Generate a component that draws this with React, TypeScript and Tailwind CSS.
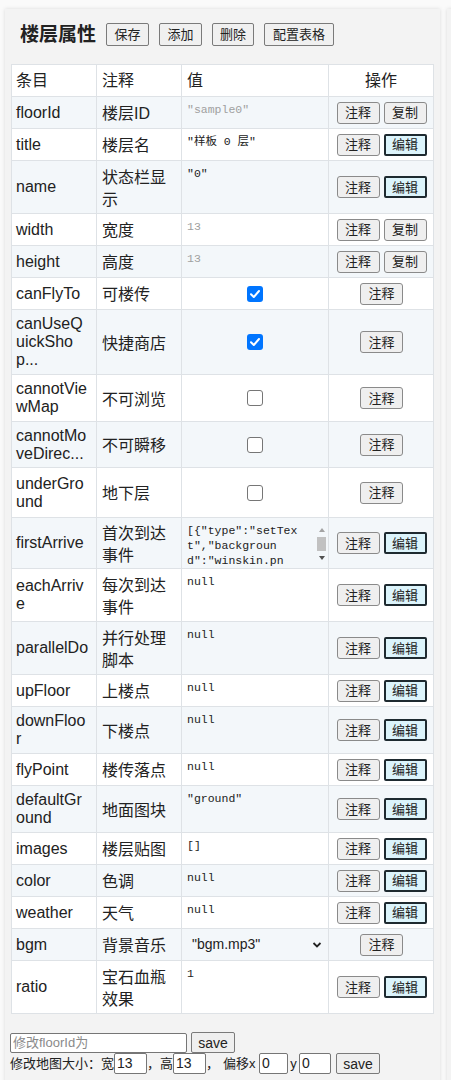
import React from "react";

type Val =
  | { t: "text"; s: string; gray?: boolean }
  | { t: "check"; on: boolean }
  | { t: "area" }
  | { t: "select"; s: string };

type Row = { k: string[]; n: string[]; v: Val; ops: string[]; h: string };

const rows: Row[] = [
  { k: ["floorId"], n: ["楼层ID"], v: { t: "text", s: '"sample0"', gray: true }, ops: ["注释", "复制"], h: "h-[32px]" },
  { k: ["title"], n: ["楼层名"], v: { t: "text", s: '"样板 0 层"' }, ops: ["注释", "编辑"], h: "h-[32px]" },
  { k: ["name"], n: ["状态栏显", "示"], v: { t: "text", s: '"0"' }, ops: ["注释", "编辑"], h: "h-[53px]" },
  { k: ["width"], n: ["宽度"], v: { t: "text", s: "13", gray: true }, ops: ["注释", "复制"], h: "h-[32px]" },
  { k: ["height"], n: ["高度"], v: { t: "text", s: "13", gray: true }, ops: ["注释", "复制"], h: "h-[32px]" },
  { k: ["canFlyTo"], n: ["可楼传"], v: { t: "check", on: true }, ops: ["注释"], h: "h-[32px]" },
  { k: ["canUseQ", "uickSho", "p..."], n: ["快捷商店"], v: { t: "check", on: true }, ops: ["注释"], h: "h-[65px]" },
  { k: ["cannotVie", "wMap"], n: ["不可浏览"], v: { t: "check", on: false }, ops: ["注释"], h: "h-[47px]" },
  { k: ["cannotMo", "veDirec..."], n: ["不可瞬移"], v: { t: "check", on: false }, ops: ["注释"], h: "h-[46px]" },
  { k: ["underGro", "und"], n: ["地下层"], v: { t: "check", on: false }, ops: ["注释"], h: "h-[50px]" },
  { k: ["firstArrive"], n: ["首次到达", "事件"], v: { t: "area" }, ops: ["注释", "编辑"], h: "h-[51px]" },
  { k: ["eachArriv", "e"], n: ["每次到达", "事件"], v: { t: "text", s: "null" }, ops: ["注释", "编辑"], h: "h-[53px]" },
  { k: ["parallelDo"], n: ["并行处理", "脚本"], v: { t: "text", s: "null" }, ops: ["注释", "编辑"], h: "h-[53px]" },
  { k: ["upFloor"], n: ["上楼点"], v: { t: "text", s: "null" }, ops: ["注释", "编辑"], h: "h-[32px]" },
  { k: ["downFloo", "r"], n: ["下楼点"], v: { t: "text", s: "null" }, ops: ["注释", "编辑"], h: "h-[47px]" },
  { k: ["flyPoint"], n: ["楼传落点"], v: { t: "text", s: "null" }, ops: ["注释", "编辑"], h: "h-[32px]" },
  { k: ["defaultGr", "ound"], n: ["地面图块"], v: { t: "text", s: '"ground"' }, ops: ["注释", "编辑"], h: "h-[47px]" },
  { k: ["images"], n: ["楼层贴图"], v: { t: "text", s: "[]" }, ops: ["注释", "编辑"], h: "h-[32px]" },
  { k: ["color"], n: ["色调"], v: { t: "text", s: "null" }, ops: ["注释", "编辑"], h: "h-[32px]" },
  { k: ["weather"], n: ["天气"], v: { t: "text", s: "null" }, ops: ["注释", "编辑"], h: "h-[32px]" },
  { k: ["bgm"], n: ["背景音乐"], v: { t: "select", s: '"bgm.mp3"' }, ops: ["注释"], h: "h-[32px]" },
  { k: ["ratio"], n: ["宝石血瓶", "效果"], v: { t: "text", s: "1" }, ops: ["注释", "编辑"], h: "h-[53px]" },
];

const MONO = "font-['Liberation_Mono','Noto_Sans_CJK_SC',monospace]";

function OpBtn({ label }: { label: string }) {
  if (label === "编辑") {
    return (
      <button className="h-[22px] w-[43px] rounded-[2px] border-2 border-[#1e2a30] bg-[#dcf4fb] text-[13px] leading-none text-[#222]">
        {label}
      </button>
    );
  }
  return (
    <button className="h-[22px] w-[43px] rounded-[3px] border border-[#8a8a8a] bg-[#efefef] text-[13px] leading-none text-[#222]">
      {label}
    </button>
  );
}

function CheckBox({ on }: { on: boolean }) {
  if (on) {
    return (
      <span className="flex h-[16px] w-[16px] items-center justify-center rounded-[3px] bg-[#0075ff]">
        <svg width="12" height="12" viewBox="0 0 12 12">
          <path d="M2 6.2 L4.8 9 L10 3" fill="none" stroke="white" strokeWidth="2" strokeLinecap="round" strokeLinejoin="round" />
        </svg>
      </span>
    );
  }
  return <span className="block h-[16px] w-[16px] rounded-[3px] border border-[#767676] bg-white" />;
}

function ValueCell({ v }: { v: Val }) {
  if (v.t === "check") {
    return (
      <div className="flex items-center justify-center border-r border-[#dee2e6]">
        <CheckBox on={v.on} />
      </div>
    );
  }
  if (v.t === "area") {
    return (
      <div className="flex border-r border-[#dee2e6] pl-[5px] pt-[3px]">
        <div className={`${MONO} w-[125px] whitespace-pre pt-[2px] text-[11.5px] leading-[15px] text-[#222]`}>
          {'[{"type":"setTex\nt","backgroun\nd":"winskin.pn'}
        </div>
        <div className="ml-[4px] flex h-[46px] w-[13px] flex-col items-center">
          <svg width="8" height="8" viewBox="0 0 8 8" className="mt-[5px]">
            <path d="M1 6 L4 2 L7 6 Z" fill="#a3a3a3" />
          </svg>
          <div className="mt-[3px] h-[14px] w-[9px] bg-[#c1c1c1]" />
          <svg width="8" height="8" viewBox="0 0 8 8" className="mt-[3px]">
            <path d="M1 2 L4 6 L7 2 Z" fill="#505050" />
          </svg>
        </div>
      </div>
    );
  }
  if (v.t === "select") {
    return (
      <div className="flex items-center border-r border-[#dee2e6] pl-[10px] pr-[6px]">
        <span className="flex-1 font-['Liberation_Sans',sans-serif] text-[14px] text-[#222]">{v.s}</span>
        <svg width="10" height="8" viewBox="0 0 10 8">
          <path d="M1.5 2 L5 5.5 L8.5 2" fill="none" stroke="#222" strokeWidth="1.8" />
        </svg>
      </div>
    );
  }
  return (
    <div className={`${MONO} border-r border-[#dee2e6] pl-[5px] pt-[5px] text-[11.5px] leading-[15px] whitespace-pre ${v.gray ? "text-[#a0a0a0]" : "text-[#222]"}`}>
      {v.s}
    </div>
  );
}

function TopBtn({ label, w }: { label: string; w: string }) {
  return (
    <button className={`h-[23px] ${w} rounded-[2px] border border-[#7a7a7a] bg-[#f0f0f0] text-[13px] leading-none text-[#222]`}>
      {label}
    </button>
  );
}

function Panel() {
  return (
    <div className="ml-[5px] mt-[9px] w-[435px] shrink-0 bg-[#f3f3f3] pl-[6px] pt-[14px] shadow-[0_0_4px_rgba(0,0,0,0.13)]">
      <div className="flex items-center pl-[9px]">
        <span className="mr-[10px] text-[19px] font-bold leading-none text-[#222]">楼层属性</span>
        <div className="flex gap-[10px]">
          <TopBtn label="保存" w="w-[43px]" />
          <TopBtn label="添加" w="w-[43px]" />
          <TopBtn label="删除" w="w-[42px]" />
          <TopBtn label="配置表格" w="w-[70px]" />
        </div>
      </div>

      <div className="mt-[18px] w-[423px] border-l border-r border-t border-[#dee2e6] bg-white">
        <div className="grid h-[32px] grid-cols-[85px_85px_147px_104px] border-b border-[#dee2e6] bg-white text-[16px] text-[#222]">
          <div className="flex items-center border-r border-[#dee2e6] pl-[4px]">条目</div>
          <div className="flex items-center border-r border-[#dee2e6] pl-[5px]">注释</div>
          <div className="flex items-center border-r border-[#dee2e6] pl-[5px]">值</div>
          <div className="flex items-center justify-center">操作</div>
        </div>
        {rows.map((r, i) => (
          <div
            key={r.k.join("")}
            className={`grid ${r.h} grid-cols-[85px_85px_147px_104px] border-b border-[#dee2e6] ${i % 2 === 0 ? "bg-[#f3f7fa]" : "bg-white"}`}
          >
            <div className="flex flex-col justify-center border-r border-[#dee2e6] pl-[4px] font-['Liberation_Sans',sans-serif] text-[16px] leading-[18px] text-[#222]">
              {r.k.map((l) => (
                <span key={l}>{l}</span>
              ))}
            </div>
            <div className="flex flex-col justify-center border-r border-[#dee2e6] pl-[5px] pt-[3px] text-[16px] leading-[22px] text-[#222]">
              {r.n.map((l) => (
                <span key={l}>{l}</span>
              ))}
            </div>
            <ValueCell v={r.v} />
            <div className="flex items-center justify-center gap-[4px] pl-[1px]">
              {r.ops.map((o) => (
                <OpBtn key={o} label={o} />
              ))}
            </div>
          </div>
        ))}
      </div>

      <div className="mt-[18px] pl-[-1px] text-[13px] text-[#222]">
        <div className="-ml-[1px] flex items-center">
          <input
            placeholder="修改floorId为"
            className="h-[20px] w-[177px] rounded-[2px] border border-[#767676] bg-white px-[2px] text-[13px] placeholder:text-[#8a8a8a]"
          />
          <button className="ml-[4px] h-[21px] w-[44px] rounded-[2px] border border-[#7a7a7a] bg-[#efefef] font-['Liberation_Sans',sans-serif] text-[14px] leading-none">
            save
          </button>
        </div>
        <div className="-ml-[1px] flex h-[21px] items-center">
          <span>修改地图大小：宽</span>
          <input readOnly value="13" className="h-[21px] w-[33px] rounded-[2px] border border-[#767676] bg-white px-[2px] font-['Liberation_Sans',sans-serif] text-[14px]" />
          <span className="w-[26px]">，高</span>
          <input readOnly value="13" className="h-[21px] w-[33px] rounded-[2px] border border-[#767676] bg-white px-[2px] font-['Liberation_Sans',sans-serif] text-[14px]" />
          <span className="w-[17px]">，</span>
          <span className="w-[36px]">偏移x</span>
          <input readOnly value="0" className="h-[21px] w-[29px] rounded-[2px] border border-[#767676] bg-white px-[2px] font-['Liberation_Sans',sans-serif] text-[14px]" />
          <span className="w-[11px] text-center">y</span>
          <input readOnly value="0" className="h-[21px] w-[32px] rounded-[2px] border border-[#767676] bg-white px-[2px] font-['Liberation_Sans',sans-serif] text-[14px]" />
          <button className="ml-[5px] h-[21px] w-[44px] rounded-[2px] border border-[#7a7a7a] bg-[#efefef] font-['Liberation_Sans',sans-serif] text-[14px] leading-none">
            save
          </button>
        </div>
        <div className="h-[30px]" />
      </div>
    </div>
  );
}

export default function App() {
  return (
    <div className="flex min-h-[1080px] overflow-hidden bg-[#fafafa] font-['Liberation_Sans','Noto_Sans_CJK_SC',sans-serif]">
      <Panel />
      <div className="ml-[7px] mt-[9px] w-[40px] shrink-0 bg-[#f3f3f3] shadow-[0_0_4px_rgba(0,0,0,0.13)]" />
    </div>
  );
}
